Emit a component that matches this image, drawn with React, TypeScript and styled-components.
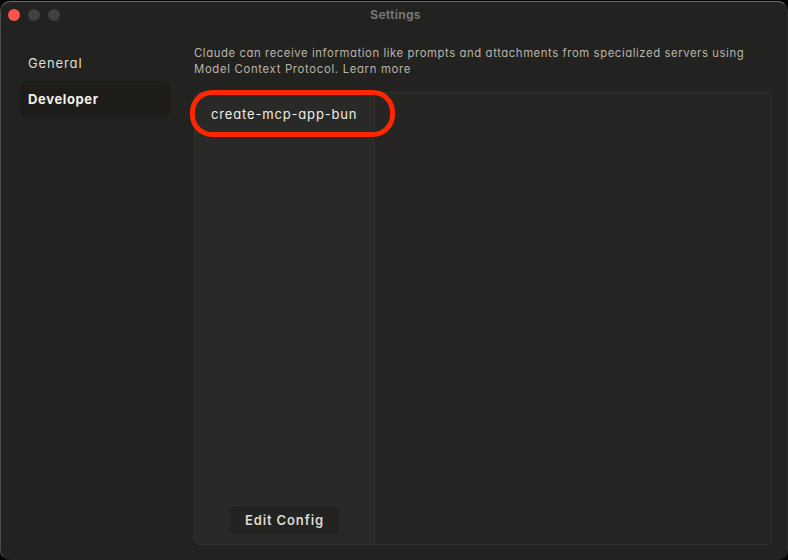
import React from "react";
import styled, { createGlobalStyle } from "styled-components";

const GlobalStyle = createGlobalStyle`
  * { box-sizing: border-box; }
  body { margin: 0; background: #050505; overflow: hidden; }
  button { font: inherit; }
`;

const Window = styled.div`
  display: flex;
  flex-direction: column;
  width: 788px;
  height: 559px;
  margin-top: 1px;
  background: #222220;
  border: 1px solid #4c4c4b;
  border-top-color: #6a6a69;
  border-right-color: #2c2c2b;
  border-bottom-color: #222220;
  border-radius: 10px;
  font-family: Inter, "Liberation Sans", sans-serif;
  font-feature-settings: "cv11" 1;
`;

const TitleBar = styled.header`
  display: grid;
  grid-template-columns: 1fr auto 1fr;
  align-items: center;
  height: 27px;
  padding: 0 7px;
  border-bottom: 1px solid #1f1f1d;
`;

const TrafficLights = styled.div`
  display: flex;
  gap: 8px;
`;

const Light = styled.span<{ $color: string }>`
  width: 12px;
  height: 12px;
  border-radius: 50%;
  background: ${(p) => p.$color};
`;

const Title = styled.h1`
  margin: 0;
  padding-left: 3px;
  color: #757573;
  font-size: 12px;
  line-height: 16px;
  font-weight: 700;
  letter-spacing: 0.25px;
  font-feature-settings: normal;
`;

const Body = styled.div`
  display: flex;
  flex: 1;
  min-height: 0;
  padding: 16px 15px 14px 19px;
  gap: 24px;
`;

const Nav = styled.nav`
  display: flex;
  flex-direction: column;
  width: 150px;
`;

const NavItem = styled.a<{ $active?: boolean }>`
  display: flex;
  align-items: center;
  height: 36px;
  padding: 0 8px;
  border-radius: 6px;
  background: ${(p) => (p.$active ? "#1d1c18" : "transparent")};
  color: ${(p) => (p.$active ? "#f1f0e9" : "#dfded8")};
  font-size: 13px;
  font-weight: ${(p) => (p.$active ? 700 : 400)};
  letter-spacing: ${(p) => (p.$active ? "0.64px" : "0.88px")};
`;

const Main = styled.main`
  display: flex;
  flex-direction: column;
  flex: 1;
  min-width: 0;
`;

const Description = styled.p`
  margin: 0 0 15px;
  color: #b8b5a9;
  font-size: 11.3px;
  line-height: 16px;
  white-space: nowrap;
`;

const DescriptionLine = styled.span<{ $tracking: number }>`
  display: block;
  letter-spacing: ${(p) => p.$tracking}px;
`;

const Panel = styled.section`
  display: flex;
  flex: 1;
  border: 1px solid #30302e;
  border-radius: 5px;
  background: #262523;
`;

const ServerColumn = styled.div`
  display: flex;
  flex-direction: column;
  justify-content: space-between;
  align-items: center;
  width: 180px;
  padding-bottom: 9px;
  border-right: 1px solid #30302e;
  border-radius: 4px 0 0 4px;
  background: #292927;
`;

const ServerItem = styled.div`
  position: relative;
  display: flex;
  align-items: center;
  width: 100%;
  height: 42px;
  padding-left: 16px;
  color: #eeede5;
  font-size: 13px;
  letter-spacing: 0.84px;
  white-space: nowrap;
`;

const Highlight = styled.span`
  position: absolute;
  top: -3px;
  left: -5px;
  width: 205px;
  height: 47px;
  border: 5px solid #ff2600;
  border-radius: 22px;
`;

const EditButton = styled.button`
  width: 111px;
  height: 30px;
  padding: 0;
  border: 1px solid #272725;
  border-top-color: #30301f;
  border-radius: 5px;
  background: #232321;
  color: #dddcd2;
  font-size: 13px;
  font-weight: 600;
  letter-spacing: 0.88px;
`;

export default function App() {
  return (
    <>
      <GlobalStyle />
      <Window>
        <TitleBar>
          <TrafficLights>
            <Light $color="#ff544d" />
            <Light $color="#40403e" />
            <Light $color="#40403e" />
          </TrafficLights>
          <Title>Settings</Title>
        </TitleBar>
        <Body>
          <Nav>
            <NavItem>General</NavItem>
            <NavItem $active>Developer</NavItem>
          </Nav>
          <Main>
            <Description>
              <DescriptionLine $tracking={0.59}>
                Claude can receive information like prompts and attachments from specialized servers using
              </DescriptionLine>
              <DescriptionLine $tracking={0.69}>Model Context Protocol. Learn more</DescriptionLine>
            </Description>
            <Panel>
              <ServerColumn>
                <ServerItem>
                  create-mcp-app-bun
                  <Highlight />
                </ServerItem>
                <EditButton>Edit Config</EditButton>
              </ServerColumn>
            </Panel>
          </Main>
        </Body>
      </Window>
    </>
  );
}
